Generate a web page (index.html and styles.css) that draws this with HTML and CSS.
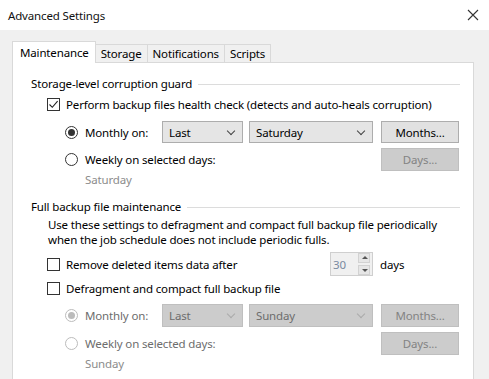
FILE: index.html
```html
<!DOCTYPE html>
<html lang="en">
<head>
  <meta charset="UTF-8" />
  <title>Advanced Settings</title>
  <link rel="stylesheet" href="styles.css">
</head>
<body>
  <div class="window">
    <div class="titlebar">
      <span class="title">Advanced Settings</span>
      <svg class="close" width="12" height="12" viewBox="0 0 12 12">
        <path d="M1 1 L11 11 M11 1 L1 11" stroke="#333" stroke-width="1.1" fill="none"/>
      </svg>
    </div>

    <div class="content">
      <div class="tabs">
        <div class="tab active">Maintenance</div>
        <div class="tab">Storage</div>
        <div class="tab">Notifications</div>
        <div class="tab">Scripts</div>
      </div>

      <div class="panel">
        <div class="group-title"><span>Storage-level corruption guard</span></div>

        <div class="check-row first">
          <span class="checkbox checked">
            <svg width="11" height="11" viewBox="0 0 11 11"><path d="M1.5 5.5 L4.3 8.3 L9.6 2.2" stroke="#222" stroke-width="1.1" fill="none"/></svg>
          </span>
          <span>Perform backup files health check (detects and auto-heals corruption)</span>
        </div>

        <div class="option-row monthly">
          <span class="radio on"></span>
          <span class="opt-label">Monthly on:</span>
          <div class="select short"><span>Last</span><i class="chev"></i></div>
          <div class="select long"><span>Saturday</span><i class="chev"></i></div>
          <div class="button">Months...</div>
        </div>

        <div class="option-row weekly">
          <span class="radio"></span>
          <span class="opt-label grow">Weekly on selected days:</span>
          <div class="button disabled">Days...</div>
        </div>
        <div class="days-note">Saturday</div>

        <div class="group-title second"><span>Full backup file maintenance</span></div>
        <p class="desc">Use these settings to defragment and compact full backup file periodically<br>when the job schedule does not include periodic fulls.</p>

        <div class="check-row spin-row">
          <span class="checkbox"></span>
          <span class="spin-label">Remove deleted items data after</span>
          <div class="spin">
            <span class="spin-value">30</span>
            <div class="spin-btns">
              <span class="arrow up"></span>
              <span class="arrow down"></span>
            </div>
          </div>
          <span class="unit">days</span>
        </div>

        <div class="check-row defrag">
          <span class="checkbox"></span>
          <span>Defragment and compact full backup file</span>
        </div>

        <div class="option-row monthly off">
          <span class="radio on disabled"></span>
          <span class="opt-label">Monthly on:</span>
          <div class="select short disabled"><span>Last</span><i class="chev"></i></div>
          <div class="select long disabled"><span>Sunday</span><i class="chev"></i></div>
          <div class="button disabled">Months...</div>
        </div>

        <div class="option-row weekly off">
          <span class="radio disabled"></span>
          <span class="opt-label grow">Weekly on selected days:</span>
          <div class="button disabled">Days...</div>
        </div>
        <div class="days-note">Sunday</div>
      </div>
    </div>
  </div>
</body>
</html>
```

FILE: styles.css
```css
body {
  margin: 0;
  font-family: "Noto Sans", "DejaVu Sans", sans-serif;
  font-size: 11.5px;
  letter-spacing: -0.15px;
  color: #000;
  background: #f0f0f0;
}

.window {
  width: 489px;
  height: 379px;
  overflow: hidden;
  background: #f0f0f0;
}

.titlebar {
  height: 30px;
  background: #fff;
  display: flex;
  align-items: center;
  justify-content: space-between;
  padding: 0 10px 0 8px;
}

.title {
  color: #111;
}

.close {
  display: block;
  margin-top: -1px;
}

.content {
  padding: 12px 15px 0 12px;
}

/* tabs */
.tabs {
  display: flex;
  align-items: flex-end;
  height: 20px;
  position: relative;
  z-index: 1;
}

.tab {
  height: 17px;
  line-height: 18px;
  padding: 0 5px;
  border: 1px solid #d9d9d9;
  border-bottom: none;
  margin-left: -1px;
  background: #f0f0f0;
}

.tab:first-child {
  margin-left: 0;
}

.tab.active {
  height: 21px;
  line-height: 21px;
  margin-bottom: -1px;
  background: #fff;
  padding: 0 6px 0 7px;
}

/* panel */
.panel {
  background: #fff;
  border: 1px solid #d9d9d9;
  border-bottom: none;
  height: 330px;
  padding: 13px 13px 0 18px;
}

.group-title {
  display: flex;
  align-items: center;
  height: 16px;
  line-height: 16px;
}

.group-title::after {
  content: "";
  flex: 1;
  height: 1px;
  background: #dcdcdc;
  margin-left: 6px;
}

.group-title.second {
  margin-top: 11px;
}

.check-row {
  display: flex;
  align-items: center;
  height: 16px;
  margin-left: 16px;
  white-space: nowrap;
}

.check-row.first {
  margin-top: 4px;
}

.checkbox {
  width: 11px;
  height: 11px;
  border: 1px solid #333;
  background: #fff;
  margin-right: 6px;
  display: flex;
  align-items: center;
  justify-content: center;
  flex: none;
}

.checkbox svg {
  display: block;
}

/* radio rows */
.option-row {
  display: flex;
  align-items: center;
  width: 394px;
  margin-left: 34px;
  white-space: nowrap;
}

.option-row.monthly {
  height: 22px;
  margin-top: 9px;
}

.option-row.weekly {
  height: 23px;
  margin-top: 5px;
}

.option-row.monthly.off {
  height: 23px;
  margin-top: 8px;
}

.radio {
  width: 11px;
  height: 11px;
  border: 1px solid #333;
  border-radius: 50%;
  background: #fff;
  margin-right: 7px;
  position: relative;
  flex: none;
}

.radio.on::after {
  content: "";
  position: absolute;
  left: 2px;
  top: 2px;
  width: 7px;
  height: 7px;
  border-radius: 50%;
  background: #333;
}

.radio.disabled {
  border-color: #bcbcbc;
}

.radio.on.disabled::after {
  background: #bcbcbc;
}

.opt-label {
  width: 77px;
  flex: none;
}

.opt-label.grow {
  flex: 1;
}

.off .opt-label {
  color: #6d6d6d;
}

.select {
  height: 100%;
  box-sizing: border-box;
  border: 1px solid #adadad;
  background: #e5e5e5;
  display: flex;
  align-items: center;
  justify-content: space-between;
  padding: 0 8px 0 6px;
  flex: none;
}

.select.short {
  width: 81px;
  margin-right: 6px;
}

.select.long {
  width: 124px;
  margin-right: 8px;
}

.select.disabled {
  background: #cccccc;
  border-color: #bfbfbf;
  color: #6d6d6d;
}

.chev {
  width: 5px;
  height: 5px;
  border-right: 1px solid #444;
  border-bottom: 1px solid #444;
  transform: rotate(45deg);
  margin-top: -3px;
}

.select.disabled .chev {
  border-color: #aaaaaa;
}

.button {
  width: 78px;
  height: 100%;
  box-sizing: border-box;
  border: 1px solid #adadad;
  background: #e1e1e1;
  display: flex;
  align-items: center;
  justify-content: center;
  flex: none;
}

.button.disabled {
  background: #cccccc;
  border-color: #bfbfbf;
  color: #838383;
}

.days-note {
  margin: 1px 0 0 54px;
  height: 16px;
  line-height: 16px;
  color: #8c8c8c;
}

.desc {
  margin: 2px 0 0 17px;
  line-height: 15px;
  white-space: nowrap;
}

/* spin box row */
.check-row.spin-row {
  height: 24px;
  margin-top: 5px;
}

.spin-label {
  width: 264px;
  flex: none;
}

.spin {
  width: 43px;
  height: 24px;
  box-sizing: border-box;
  border: 1px solid #cfcfcf;
  background: #f0f0f0;
  display: flex;
  align-items: center;
  justify-content: space-between;
  padding: 0 2px;
}

.spin-value {
  color: #7a8aa0;
}

.spin-btns {
  display: flex;
  flex-direction: column;
  gap: 2px;
  width: 12px;
}

.arrow {
  height: 8px;
  background: #e6e6e6;
  border: 1px solid #d2d2d2;
  position: relative;
}

.arrow::after {
  content: "";
  position: absolute;
  left: 3px;
  width: 0;
  height: 0;
  border-left: 3px solid transparent;
  border-right: 3px solid transparent;
}

.arrow.up::after {
  top: 2px;
  border-bottom: 3px solid #555;
}

.arrow.down::after {
  top: 3px;
  border-top: 3px solid #555;
}

.unit {
  margin-left: 7px;
}

.check-row.defrag {
  margin-top: 4px;
}
```
